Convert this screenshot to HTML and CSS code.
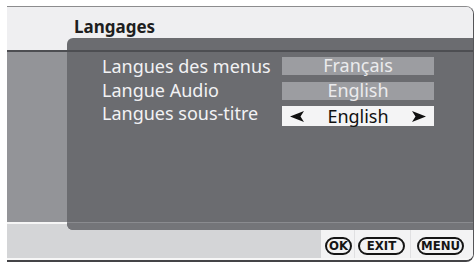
FILE: index.html
```html
<!DOCTYPE html>
<html>
<head>
<meta charset="utf-8">
<link rel="stylesheet" href="styles.css">
</head>
<body>
<div class="screen">
  <div class="header"><span class="title">Langages</span></div>
  <div class="body">
    <div class="side"></div>
  </div>
  <div class="divider"></div>
  <div class="footer">
    <div class="footer-fill"></div>
    <div class="buttons">
      <div class="slot slot-ok"><span class="btn btn-ok">OK</span></div>
      <div class="slot slot-exit"><span class="btn btn-exit">EXIT</span></div>
      <div class="slot slot-menu"><span class="btn btn-menu">MENU</span></div>
    </div>
  </div>
  <div class="panel">
    <div class="rows">
      <div class="labels">
        <div class="label">Langues des menus</div>
        <div class="label">Langue Audio</div>
        <div class="label">Langues sous-titre</div>
      </div>
      <div class="values">
        <div class="value">Français</div>
        <div class="value">English</div>
        <div class="value selected">
          <svg class="arrow" width="14" height="11" viewBox="0 0 14 11"><path d="M0 5.5 L14 0 L10.5 5.5 L14 11 Z" fill="#111"/></svg>
          <span>English</span>
          <svg class="arrow" width="14" height="11" viewBox="0 0 14 11"><path d="M14 5.5 L0 0 L3.5 5.5 L0 11 Z" fill="#111"/></svg>
        </div>
      </div>
    </div>
    <div class="panel-bottom"></div>
  </div>
</div>
</body>
</html>
```

FILE: styles.css
```css
html, body {
  margin: 0;
  padding: 0;
  background: #ffffff;
}
body {
  width: 476px;
  height: 262px;
  overflow: hidden;
  font-family: "Noto Sans", "DejaVu Sans", sans-serif;
}
.screen {
  position: relative;
  margin: 6px 0 0 7px;
  width: 466px;
  height: 253px;
  border-top: 1px solid #8c8c8e;
  border-right: 1px solid #555558;
  border-bottom: 2px solid #444447;
  border-top-right-radius: 8px;
  border-bottom-right-radius: 8px;
  overflow: hidden;
  display: flex;
  flex-direction: column;
}
.header {
  height: 45px;
  flex: none;
  background: #efeff1;
  border-bottom: 2px solid #4d4e52;
  padding-left: 67px;
  box-sizing: border-box;
}
.title {
  display: block;
  margin-top: 10px;
  font-weight: bold;
  font-size: 17px;
  line-height: 20px;
  color: #1e1e20;
}
.body {
  height: 170px;
  flex: none;
  display: flex;
}
.side {
  width: 60px;
  background: #939498;
}
.divider {
  height: 2px;
  flex: none;
  background: #f6f6f6;
}
.footer {
  height: 36px;
  flex: none;
  display: flex;
  border-bottom: 2px solid #f7f7f7;
  box-sizing: border-box;
}
.footer-fill {
  flex: 1;
  background: #d4d5d7;
}
.buttons {
  width: 152px;
  background: #f3f3f4;
  display: flex;
}
.slot {
  display: flex;
  align-items: center;
  justify-content: center;
  padding-top: 10px;
  border-left: 1px solid #e0e0e2;
  box-sizing: border-box;
}
.slot-ok {
  width: 33px;
  border-left: none;
  padding-left: 2px;
}
.slot-exit {
  width: 56px;
  padding-right: 2px;
}
.slot-menu {
  width: 62px;
  justify-content: flex-start;
  padding-left: 6px;
}
.btn {
  display: inline-block;
  height: 14px;
  line-height: 14px;
  border: 2px solid #151515;
  border-radius: 10px;
  font-family: "DejaVu Sans Condensed", "DejaVu Sans", sans-serif;
  font-weight: bold;
  font-size: 13px;
  color: #151515;
  text-align: center;
}
.btn-ok {
  padding: 0 2px;
}
.btn-exit {
  padding: 0 7px;
}
.btn-menu {
  padding: 0 2px;
}
.panel {
  position: absolute;
  left: 60px;
  top: 31px;
  right: 0;
  height: 192px;
  background: #6b6c70;
  border-radius: 6px 0 0 6px;
  overflow: hidden;
}
.panel::before {
  content: "";
  position: absolute;
  left: 0;
  right: 0;
  top: 12px;
  height: 2px;
  background: #4d4e52;
}
.panel-bottom {
  position: absolute;
  left: 0;
  right: 0;
  bottom: 0;
  height: 7px;
  background: #747579;
  border-top: 1px solid #8a8b8f;
}
.rows {
  display: flex;
  padding-left: 35px;
}
.labels {
  width: 180px;
  padding-top: 17px;
}
.label {
  font-size: 18px;
  line-height: 23.5px;
  color: #f2f2f4;
}
.values {
  width: 152px;
  padding-top: 19px;
  display: flex;
  flex-direction: column;
  gap: 7px;
}
.value {
  height: 18px;
  background: #9c9da1;
  color: #ebebed;
  font-size: 18px;
  line-height: 17px;
  text-align: center;
}
.value.selected {
  height: 20px;
  line-height: 19px;
  margin-top: -1px;
  background: #f4f4f5;
  color: #111;
  display: flex;
  align-items: center;
  justify-content: space-between;
  padding: 0 8px;
}
```
